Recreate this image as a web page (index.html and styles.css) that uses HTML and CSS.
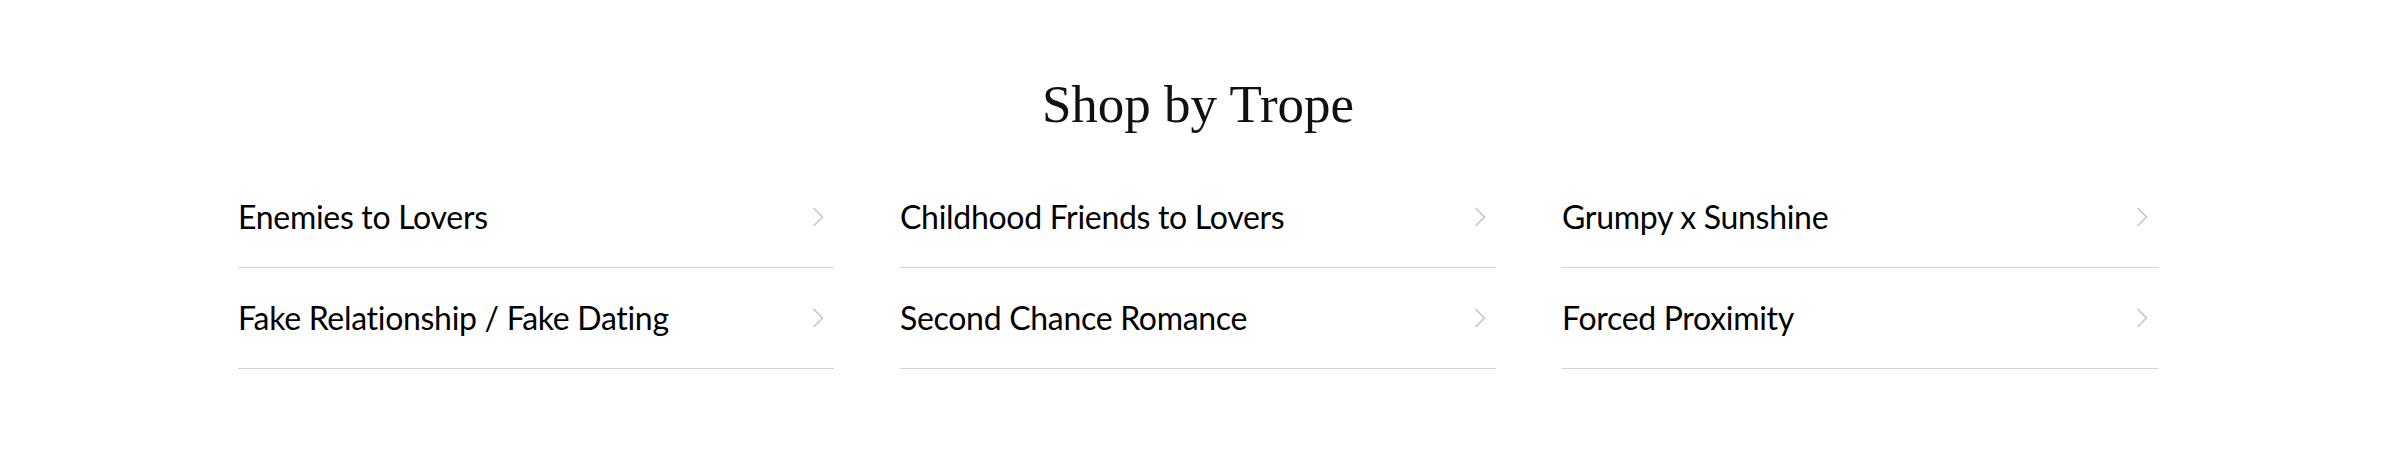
FILE: index.html
```html
<!DOCTYPE html>
<html lang="en">
<head>
<meta charset="utf-8">
<title>Shop by Trope</title>
<link rel="stylesheet" href="styles.css">
</head>
<body>
<section class="tropes">
  <h2 class="tropes-title">Shop by Trope</h2>
  <ul class="trope-grid">
    <li><a class="trope-link" href="#"><span class="trope-name">Enemies to Lovers</span><svg class="chev" width="12" height="20" viewBox="0 0 12 20"><polyline points="1.5,1 10.5,10 1.5,19"/></svg></a></li>
    <li><a class="trope-link" href="#"><span class="trope-name">Childhood Friends to Lovers</span><svg class="chev" width="12" height="20" viewBox="0 0 12 20"><polyline points="1.5,1 10.5,10 1.5,19"/></svg></a></li>
    <li><a class="trope-link" href="#"><span class="trope-name">Grumpy x Sunshine</span><svg class="chev" width="12" height="20" viewBox="0 0 12 20"><polyline points="1.5,1 10.5,10 1.5,19"/></svg></a></li>
    <li><a class="trope-link" href="#"><span class="trope-name">Fake Relationship / Fake Dating</span><svg class="chev" width="12" height="20" viewBox="0 0 12 20"><polyline points="1.5,1 10.5,10 1.5,19"/></svg></a></li>
    <li><a class="trope-link" href="#"><span class="trope-name">Second Chance Romance</span><svg class="chev" width="12" height="20" viewBox="0 0 12 20"><polyline points="1.5,1 10.5,10 1.5,19"/></svg></a></li>
    <li><a class="trope-link" href="#"><span class="trope-name">Forced Proximity</span><svg class="chev" width="12" height="20" viewBox="0 0 12 20"><polyline points="1.5,1 10.5,10 1.5,19"/></svg></a></li>
  </ul>
</section>
</body>
</html>
```
FILE: styles.css
```css
html, body {
  margin: 0;
  padding: 0;
  background: #ffffff;
}

.tropes {
  width: 1920px;
  margin-left: 238px;
  padding-top: 78px;
}

.tropes-title {
  margin: 0;
  font-family: "Liberation Serif", "Times New Roman", serif;
  font-weight: 400;
  font-size: 53px;
  line-height: 1;
  color: #111111;
  text-align: center;
}

.trope-grid {
  list-style: none;
  margin: 36px 0 0 0;
  padding: 0;
  display: grid;
  grid-template-columns: repeat(3, 596px);
  column-gap: 66px;
}

.trope-link {
  display: flex;
  align-items: center;
  justify-content: space-between;
  height: 100px;
  padding-right: 10px;
  border-bottom: 1px solid #d2d2d2;
  text-decoration: none;
  color: #000000;
}

.trope-name {
  font-family: Lato, "Liberation Sans", sans-serif;
  font-size: 32px;
  line-height: 1.2;
  letter-spacing: -0.3px;
}

.chev {
  display: block;
  fill: none;
  stroke: #c6c6c6;
  stroke-width: 1.6;
}
```
